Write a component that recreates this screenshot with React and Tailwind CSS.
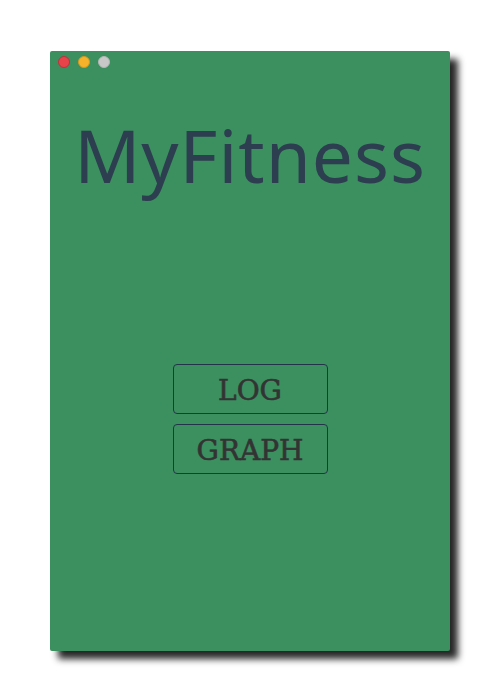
import React from 'react';

const App = () => {
  return (
    <div className="w-[500px] h-[700px] bg-white pt-[51px]">
      <div className="mx-auto w-[400px] h-[600px] bg-[#3c8f5f] rounded-[2px] shadow-[8px_8px_7px_rgba(0,0,0,0.85)] flex flex-col">
        {/* Window controls */}
        <div className="flex gap-2 pl-[8px] pt-[5px]">
          <span className="w-3 h-3 rounded-full bg-[#e8434a] border border-[#c0303a]" />
          <span className="w-3 h-3 rounded-full bg-[#f6b22a] border border-[#d9981c]" />
          <span className="w-3 h-3 rounded-full bg-[#c8c8c8] border border-[#b5b5b5]" />
        </div>

        <h1 className="mt-[50px] text-center text-[73px] leading-none text-[#2c3e50] font-['Noto_Sans',sans-serif] tracking-[1px]">
          MyFitness
        </h1>

        <div className="mt-[173px] flex flex-col items-center gap-[10px]">
          <button className="w-[155px] h-[50px] pt-[3px] border border-[#23344a] rounded-[4px] text-[28px] text-[#333] font-['DejaVu_Serif',serif] [-webkit-text-stroke:0.6px_#333] leading-none">
            LOG
          </button>
          <button className="w-[155px] h-[50px] pt-[3px] border border-[#23344a] rounded-[4px] text-[28px] text-[#333] font-['DejaVu_Serif',serif] [-webkit-text-stroke:0.6px_#333] leading-none">
            GRAPH
          </button>
        </div>
      </div>
    </div>
  );
};

export default App;
